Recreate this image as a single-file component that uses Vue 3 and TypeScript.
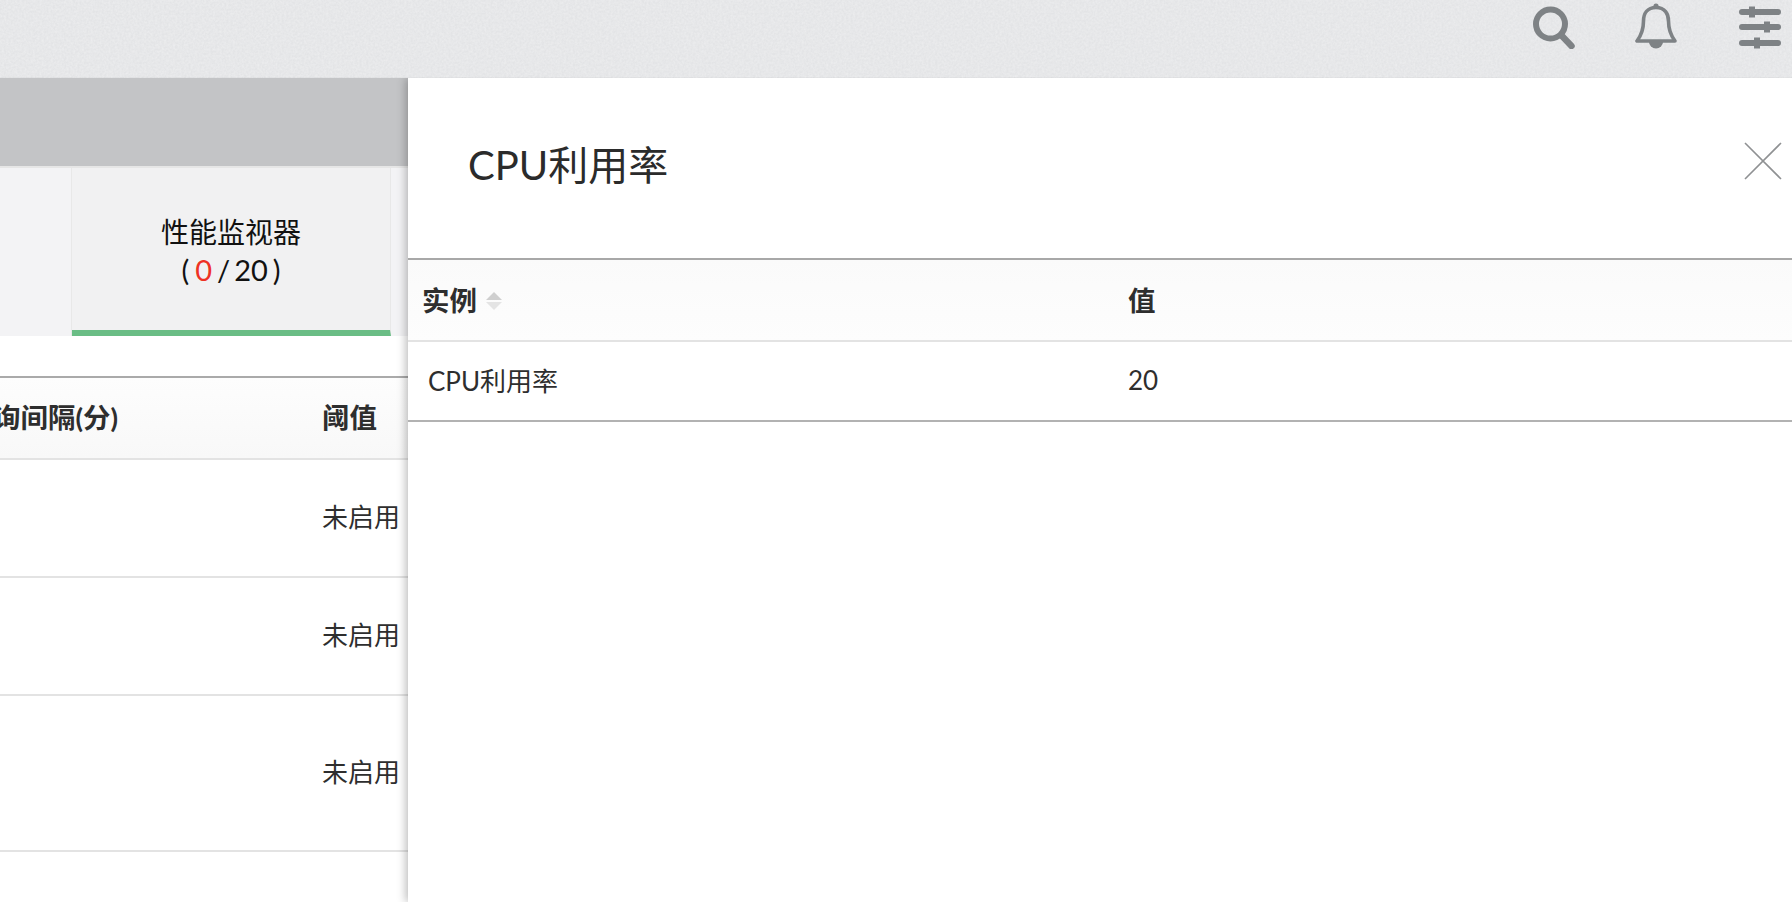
<script setup lang="ts">
const rows: { h: number }[] = [{ h: 118 }, { h: 118 }, { h: 156 }]
</script>

<template>
  <div class="page">
    <header class="topbar">
      <svg class="noise" width="1792" height="78" aria-hidden="true">
        <filter id="grain">
          <feTurbulence type="fractalNoise" baseFrequency="0.45" numOctaves="3" seed="4" />
          <feColorMatrix type="matrix" values="0 0 0 0 1  0 0 0 0 1  0 0 0 0 1  0.5 0 0 0 -0.12" />
        </filter>
        <rect width="1792" height="78" filter="url(#grain)" />
      </svg>
      <svg class="icon search" width="42" height="46" viewBox="0 0 42 46">
        <circle cx="17.5" cy="21" r="14.5" fill="none" stroke="#7e8285" stroke-width="6" />
        <path d="M29 33 L38.5 43" fill="none" stroke="#7e8285" stroke-width="6.5" stroke-linecap="round" />
      </svg>
      <svg class="icon bell" width="42" height="46" viewBox="0 0 42 46">
        <path
          d="M21 4.5 C12 4.5 8.5 11 8.5 18 C8.5 27 6.5 32 2 38 L40 38 C35.5 32 33.5 27 33.5 18 C33.5 11 30 4.5 21 4.5 Z"
          fill="none" stroke="#7e8285" stroke-width="3.6" stroke-linejoin="round" />
        <circle cx="21" cy="3.2" r="2.6" fill="#7e8285" />
        <path d="M14 39 L28 39 A7 6.5 0 0 1 14 39 Z" fill="#7e8285" />
      </svg>
      <svg class="icon sliders" width="42" height="46" viewBox="0 0 42 46">
        <g stroke="#7e8285" stroke-width="6" stroke-linecap="round">
          <path d="M3 9 H39" />
          <path d="M3 24 H39" />
          <path d="M3 40 H39" />
        </g>
        <g fill="#7e8285">
          <rect x="10" y="3.5" width="6" height="11" />
          <rect x="25" y="18.5" width="6" height="11" />
          <rect x="15" y="34.5" width="6" height="11" />
        </g>
      </svg>
    </header>

    <main class="content">
      <section class="back">
        <div class="band"></div>
        <div class="tabs">
          <div class="tab-side first"></div>
          <div class="tab active">
            <span>性能监视器</span>
            <span class="count">(<em>0</em>/<b>20</b>)</span>
          </div>
          <div class="tab-side"></div>
        </div>
        <div class="back-table">
          <div class="back-head">
            <div class="cell-a">轮询间隔(分)</div>
            <div class="cell-b">阈值</div>
          </div>
          <div v-for="(r, i) in rows" :key="i" class="back-row" :style="{ height: r.h + 'px' }">
            <div class="cell-a"></div>
            <div class="cell-b">未启用</div>
          </div>
        </div>
      </section>

      <aside class="panel">
        <div class="panel-head">
          <h1>CPU利用率</h1>
          <svg class="close" width="38" height="38" viewBox="0 0 38 38">
            <path d="M1 1 L37 37 M37 1 L1 37" stroke="#8f9193" stroke-width="1.6" fill="none" />
          </svg>
        </div>
        <div class="panel-table">
          <div class="p-head">
            <div class="p-first">
              实例
              <span class="sort"><i class="up"></i><i class="down"></i></span>
            </div>
            <div class="p-second">值</div>
          </div>
          <div class="p-row">
            <div class="p-first-cell">CPU利用率</div>
            <div class="p-second">20</div>
          </div>
        </div>
      </aside>
    </main>
  </div>
</template>

<style>
html,
body {
  margin: 0;
  background: #fff;
  overflow: hidden;
}
</style>

<style scoped>
.page {
  width: 1792px;
  height: 902px;
  display: flex;
  flex-direction: column;
  overflow: hidden;
  font-family: Lato, "Noto Sans CJK SC", sans-serif;
  color: #2e2e2e;
}
.topbar {
  position: relative;
  z-index: 2;
  box-sizing: border-box;
  height: 78px;
  flex: none;
  display: flex;
  justify-content: flex-end;
  align-items: flex-start;
  padding: 3px 11px 0 0;
  background: #e3e4e6;
  border-bottom: 1px solid #dcdddf;
}
.noise {
  position: absolute;
  left: 0;
  top: 0;
}
.icon {
  display: block;
  position: relative;
}
.bell {
  margin-left: 60px;
  margin-right: 62px;
}
.content {
  flex: 1;
  display: flex;
  min-height: 0;
}
.back {
  width: 408px;
  flex: none;
  overflow: hidden;
}
.band {
  height: 88px;
  background: #c3c4c6;
}
.tabs {
  height: 170px;
  display: flex;
  box-sizing: border-box;
  border-top: 2px solid #e6e6e6;
  background: #f3f3f5;
}
.tab-side {
  flex: 1;
}
.tab-side.first {
  flex: none;
  width: 71px;
  border-right: 1px solid #e8e8e8;
}
.tab {
  width: 319px;
  flex: none;
  box-sizing: border-box;
  background: #f1f1f2;
  border-right: 1px solid #e8e8e8;
  border-bottom: 6px solid #6abd85;
  display: flex;
  flex-direction: column;
  align-items: center;
  padding-top: 45px;
  font-size: 28px;
  line-height: 38px;
  color: #111;
}
.count {
  font-size: 29px;
}
.count em {
  font-style: normal;
  color: #ee3124;
  margin: 0 5px 0 6px;
}
.count b {
  font-weight: 400;
  margin: 0 5px 0 4px;
}
.back-table {
  margin-top: 40px;
  border-top: 2px solid #aaa;
}
.back-head,
.back-row {
  display: grid;
  grid-template-columns: 322px 86px;
  box-sizing: border-box;
  border-bottom: 2px solid #e3e3e3;
}
.back-head {
  height: 82px;
  background: linear-gradient(#fdfdfd, #f8f8f8);
  font-weight: 700;
  font-size: 27.5px;
  align-items: center;
  padding-bottom: 5px;
}
.back-row {
  font-size: 26px;
  align-items: center;
  padding-bottom: 5px;
}
.cell-a {
  display: flex;
  justify-content: flex-end;
  padding-right: 204px;
  white-space: nowrap;
  overflow: hidden;
}
.cell-b {
  white-space: nowrap;
}
.panel {
  flex: 1;
  position: relative;
  z-index: 1;
  background: #fff;
  box-shadow: -2px 0 9px rgba(0, 0, 0, 0.28);
}
.panel-head {
  height: 180px;
  display: flex;
  justify-content: space-between;
  align-items: flex-start;
  box-sizing: border-box;
  padding: 64px 10px 0 60px;
}
.panel-head h1 {
  margin: -3px 0 0;
  font-size: 40px;
  font-weight: 400;
  line-height: 52px;
  color: #2b2b2b;
}
.close {
  display: block;
}
.panel-table {
  border-top: 2px solid #a8a8a8;
}
.p-head,
.p-row {
  display: flex;
  align-items: center;
  box-sizing: border-box;
}
.p-head {
  height: 82px;
  font-weight: 700;
  font-size: 27.5px;
  border-bottom: 2px solid #e3e3e3;
  background: linear-gradient(#fafafa, #fdfdfd);
  padding-bottom: 3px;
}
.p-row {
  height: 80px;
  font-size: 26px;
  border-bottom: 2px solid #b2b2b2;
  padding-bottom: 3px;
}
.p-first {
  width: 720px;
  box-sizing: border-box;
  padding-left: 14px;
  display: flex;
  align-items: center;
  gap: 9px;
}
.p-first-cell {
  width: 720px;
  box-sizing: border-box;
  padding-left: 20px;
}
.sort {
  display: flex;
  flex-direction: column;
  gap: 2px;
  margin-top: 5px;
}
.sort i {
  display: block;
  width: 0;
  height: 0;
  border-left: 8px solid transparent;
  border-right: 8px solid transparent;
}
.sort .up {
  border-bottom: 8px solid #cfcfcf;
}
.sort .down {
  border-top: 8px solid #e4e4e4;
}
</style>
